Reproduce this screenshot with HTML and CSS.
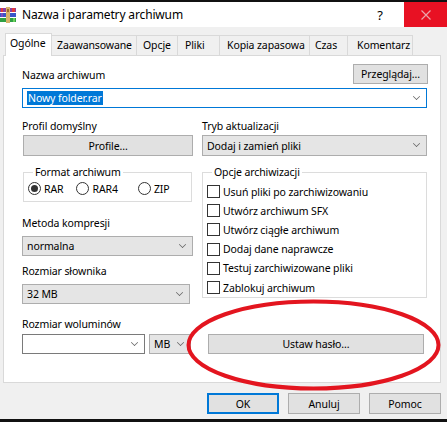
FILE: index.html
```html
<!DOCTYPE html>
<html lang="pl">
<head>
<meta charset="utf-8">
<title>Nazwa i parametry archiwum</title>
<link rel="stylesheet" href="styles.css">
</head>
<body>
<div class="window">
  <div class="titlebar">
    <svg class="app-icon" width="16" height="16" viewBox="0 0 16 16">
      <rect x="0" y="1" width="16" height="4" fill="#8a3fa0"/>
      <rect x="1" y="1" width="2" height="4" fill="#e23a3a"/>
      <rect x="12" y="1" width="3" height="4" fill="#e23a3a"/>
      <rect x="0" y="6" width="16" height="4" fill="#3a56c8"/>
      <rect x="1" y="6" width="2" height="4" fill="#7a4cc0"/>
      <rect x="0" y="11" width="16" height="4" fill="#2fa043"/>
      <rect x="13" y="11" width="2" height="4" fill="#6ad05a"/>
      <rect x="6" y="0" width="4" height="16" fill="#d8b26a"/>
      <rect x="7" y="2" width="2" height="3" fill="#9a6a2a"/>
    </svg>
    <span class="title">Nazwa i parametry archiwum</span>
    <span class="help">?</span>
    <span class="close">
      <svg width="10" height="10" viewBox="0 0 10 10"><path d="M0.5 0.5L9.5 9.5M9.5 0.5L0.5 9.5" stroke="#eba4aa" stroke-width="1.2"/></svg>
    </span>
  </div>

  <div class="body">
    <div class="tabs">
      <div class="tab active">Ogólne</div>
      <div class="tab">Zaawansowane</div>
      <div class="tab">Opcje</div>
      <div class="tab">Pliki</div>
      <div class="tab">Kopia zapasowa</div>
      <div class="tab">Czas</div>
      <div class="tab">Komentarz</div>
    </div>

    <div class="panel">
      <div class="name-row">
        <span class="label">Nazwa archiwum</span>
        <button class="btn browse">Przeglądaj...</button>
      </div>
      <div class="combo edit focus">
        <span class="sel">Nowy folder.rar</span>
        <span class="chev"></span>
      </div>

      <div class="cols">
        <div class="col left">
          <div class="label">Profil domyślny</div>
          <button class="btn profile">Profile...</button>

          <fieldset class="group format">
            <legend>Format archiwum</legend>
            <div class="radios">
              <label class="radio"><span class="dot checked"></span>RAR</label>
              <label class="radio"><span class="dot"></span>RAR4</label>
              <label class="radio"><span class="dot"></span>ZIP</label>
            </div>
          </fieldset>

          <div class="label l-method">Metoda kompresji</div>
          <div class="combo list w-method"><span>normalna</span><span class="chev"></span></div>

          <div class="label l-dict">Rozmiar słownika</div>
          <div class="combo list w-dict"><span>32 MB</span><span class="chev"></span></div>

          <div class="label l-vol">Rozmiar woluminów</div>
          <div class="vol-row">
            <div class="combo edit vol"><span></span><span class="chev"></span></div>
            <div class="combo list unit"><span>MB</span><span class="chev"></span></div>
          </div>
        </div>

        <div class="col right">
          <div class="label">Tryb aktualizacji</div>
          <div class="combo list mode"><span>Dodaj i zamień pliki</span><span class="chev"></span></div>

          <fieldset class="group opts">
            <legend>Opcje archiwizacji</legend>
            <label class="check"><span class="box"></span>Usuń pliki po zarchiwizowaniu</label>
            <label class="check"><span class="box"></span>Utwórz archiwum SFX</label>
            <label class="check"><span class="box"></span>Utwórz ciągłe archiwum</label>
            <label class="check"><span class="box"></span>Dodaj dane naprawcze</label>
            <label class="check"><span class="box"></span>Testuj zarchiwizowane pliki</label>
            <label class="check"><span class="box"></span>Zablokuj archiwum</label>
          </fieldset>

          <button class="btn password">Ustaw hasło...</button>
        </div>
      </div>
    </div>

    <div class="footer">
      <button class="btn dlg default">OK</button>
      <button class="btn dlg">Anuluj</button>
      <button class="btn dlg">Pomoc</button>
    </div>
  </div>
  <div class="bottom-edge"></div>

  <svg class="annotation" width="447" height="422" viewBox="0 0 447 422">
    <ellipse cx="313.5" cy="343" rx="125" ry="43.5" fill="none" stroke="#e3151f" stroke-width="4"/>
  </svg>
</div>
</body>
</html>
```

FILE: styles.css
```css
* { box-sizing: border-box; }

html, body {
  margin: 0;
  padding: 0;
  background: #f0f0f0;
}

body {
  font-family: "Noto Sans", "Open Sans", sans-serif;
  font-size: 10.5px;
  letter-spacing: -0.1px;
  color: #000;
}

.window {
  position: relative;
  width: 447px;
  height: 422px;
  overflow: hidden;
  background: #f0f0f0;
  border-top: 2px solid #111;
}

/* title bar */
.titlebar {
  height: 25px;
  background: #fff;
  display: flex;
  align-items: center;
}

.app-icon {
  flex: none;
  margin-top: 1px;
}

.title {
  margin-left: 6px;
  font-size: 12px;
  letter-spacing: -0.15px;
  flex: 1;
}

.help {
  width: 44px;
  text-align: center;
  font-size: 13px;
  margin-right: 2px;
}

.close {
  width: 43px;
  height: 25px;
  background: #e81123;
  display: flex;
  align-items: center;
  justify-content: center;
}

/* body */
.body {
  padding-top: 6px;
}

.tabs {
  display: flex;
  align-items: flex-end;
  height: 22px;
  padding-left: 5px;
  position: relative;
  z-index: 1;
}

.tab {
  flex: none;
  height: 20px;
  padding: 0 0 0 5px;
  line-height: 18px;
  border: 1px solid #d9d9d9;
  border-left: none;
  border-bottom: none;
  background: #f0f0f0;
  white-space: nowrap;
}

.tab.active {
  height: 23px;
  margin-bottom: -1px;
  background: #fff;
  border-left: 1px solid #d9d9d9;
  line-height: 19px;
  padding-left: 4px;
  width: 47px;
}

.tab:nth-child(2) { width: 85px; }
.tab:nth-child(3) { width: 41px; padding-left: 6px; }
.tab:nth-child(4) { width: 42px; padding-left: 7px; }
.tab:nth-child(5) { width: 90px; padding-left: 7px; }
.tab:nth-child(6) { width: 38px; }
.tab:nth-child(7) { width: 65px; padding-left: 9px; }

.panel {
  margin: 0 6px 0 3px;
  height: 328px;
  background: #fff;
  border: 1px solid #d9d9d9;
  padding: 8px 13px 0 18px;
}

.label {
  line-height: 15px;
  white-space: nowrap;
}

.name-row {
  display: flex;
  justify-content: space-between;
  align-items: flex-end;
  height: 20px;
}

.name-row .label {
  margin-bottom: 1px;
}

.btn {
  font: inherit;
  letter-spacing: inherit;
  color: #000;
  background: #e1e1e1;
  border: 1px solid #adadad;
  padding: 0;
  margin: 0;
  height: 20px;
  display: block;
  text-align: center;
}

.browse {
  width: 75px;
  margin-right: -1px;
}

.combo {
  height: 20px;
  display: flex;
  align-items: center;
  justify-content: space-between;
  padding: 0 6px 0 4px;
  border: 1px solid #adadad;
  background: #e5e5e5;
  white-space: nowrap;
}

.combo.edit {
  background: #fff;
  border-color: #7a7a7a;
}

.combo.focus {
  border-color: #0078d7;
  margin-top: 4px;
}

.sel {
  background: #0078d7;
  color: #fff;
  line-height: 14px;
  padding: 0 1px;
}

.chev {
  width: 7px;
  height: 7px;
  flex: none;
  border-right: 1px solid #606060;
  border-bottom: 1px solid #606060;
  transform: translateY(-2px) rotate(45deg) scale(0.72, 0.72);
}

.cols {
  display: flex;
  gap: 10px;
  margin-top: 11px;
}

.col {
  display: flex;
  flex-direction: column;
}

.col.left {
  width: 170px;
}

.col.right {
  flex: 1;
}

.profile {
  width: 170px;
  height: 21px;
  margin: 1px 0 0 1px;
}

.group {
  margin: 0;
  border: 1px solid #dcdcdc;
  min-width: 0;
}

.group legend {
  padding: 0 2px;
  margin-left: 5px;
  line-height: 15px;
}

.format {
  margin: 9px 0 0 1px;
  padding: 0 4px 4px 4px;
}

.radios {
  display: flex;
  height: 17px;
  align-items: center;
}

.radio {
  display: flex;
  align-items: center;
  gap: 3px;
}

.radio:nth-child(2) { margin-left: 13px; }
.radio:nth-child(3) { margin-left: 20px; }

.dot {
  width: 13px;
  height: 13px;
  border: 1px solid #333;
  border-radius: 50%;
  background: #fff;
  display: flex;
  align-items: center;
  justify-content: center;
}

.dot.checked::after {
  content: "";
  width: 7px;
  height: 7px;
  border-radius: 50%;
  background: #333;
}

.l-method { margin-top: 14px; }
.w-method { margin-top: 5px; width: 171px; }
.l-dict { margin-top: 8px; }
.w-dict { margin-top: 5px; width: 168px; }
.l-vol { margin-top: 13px; }

.vol-row {
  display: flex;
  gap: 4px;
  margin-top: 2px;
}

.vol { width: 123px; }
.unit { width: 42px; }

.mode {
  margin-top: 1px;
  height: 21px;
}

.opts {
  margin-top: 9px;
  padding: 2px 4px 0 4px;
}

.check {
  display: flex;
  align-items: center;
  gap: 3px;
  height: 19.2px;
  white-space: nowrap;
}

.box {
  width: 13px;
  height: 13px;
  border: 1px solid #333;
  background: #fff;
}

.password {
  margin: auto 3px 0 6px;
  height: 20px;
}

.footer {
  display: flex;
  justify-content: flex-end;
  gap: 9px;
  padding: 10px 6px 0 0;
}

.dlg {
  width: 72px;
  height: 21px;
}

.dlg.default {
  border: 2px solid #0078d7;
}

.bottom-edge {
  position: absolute;
  left: 0;
  right: 0;
  bottom: 0;
  height: 3px;
  background: #111;
}

.annotation {
  position: absolute;
  left: 0;
  top: 0;
  pointer-events: none;
}
```
